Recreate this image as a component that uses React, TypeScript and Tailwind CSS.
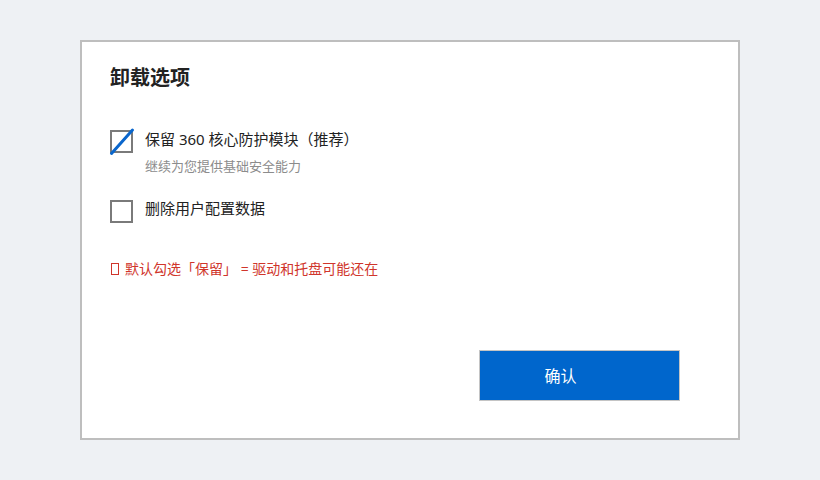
import React from 'react'

const font = { fontFamily: '"Noto Sans", "Noto Sans CJK SC", sans-serif' }

function Box({ checked }: { checked?: boolean }) {
  return (
    <div className="relative w-[23px] h-[23px] shrink-0 border-2 border-[#7a7a7a] bg-white">
      {checked && (
        <svg className="absolute -left-[2px] -top-[2px] overflow-visible" width="23" height="23" viewBox="0 0 23 23">
          <line x1="1.5" y1="23.5" x2="22.5" y2="0" stroke="#0a66cc" strokeWidth="3" strokeLinecap="round" />
        </svg>
      )}
    </div>
  )
}

export default function App() {
  return (
    <div className="w-[820px] h-[480px] bg-[#eef1f4] pt-[40px]" style={font}>
      <div className="mx-auto w-[660px] h-[400px] bg-white border-2 border-[#bebebe] flex flex-col px-[28px] pt-[22px]">
        <h1 className="text-[20px] leading-[28px] font-bold text-[#222]">卸载选项</h1>

        <div className="mt-[38px] flex gap-[12px]">
          <Box checked />
          <div className="flex flex-col">
            <span className="text-[15px] leading-[20px] text-[#222] -mt-[1px]">保留 360 核心防护模块（推荐）</span>
            <span className="text-[13px] leading-[18px] text-[#8c8c8c] mt-[8px]">继续为您提供基础安全能力</span>
          </div>
        </div>

        <div className="mt-[25px] flex gap-[12px]">
          <Box />
          <span className="text-[15px] leading-[20px] text-[#222] -mt-[2px]">删除用户配置数据</span>
        </div>

        <div className="mt-[36px] flex items-center text-[14px] leading-[20px] text-[#d0352b]">
          <span className="inline-block w-[8px] h-[12px] border border-[#d0352b] ml-[1px] mr-[6px]" />
          <span>默认勾选「保留」 = 驱动和托盘可能还在</span>
        </div>

        <div className="mt-[71px] flex justify-end pr-[30px]">
          <button className="w-[201px] h-[51px] bg-[#0066cc] border border-[#c4c4c4] text-white text-[16px] pr-[38px]">确认</button>
        </div>
      </div>
    </div>
  )
}
